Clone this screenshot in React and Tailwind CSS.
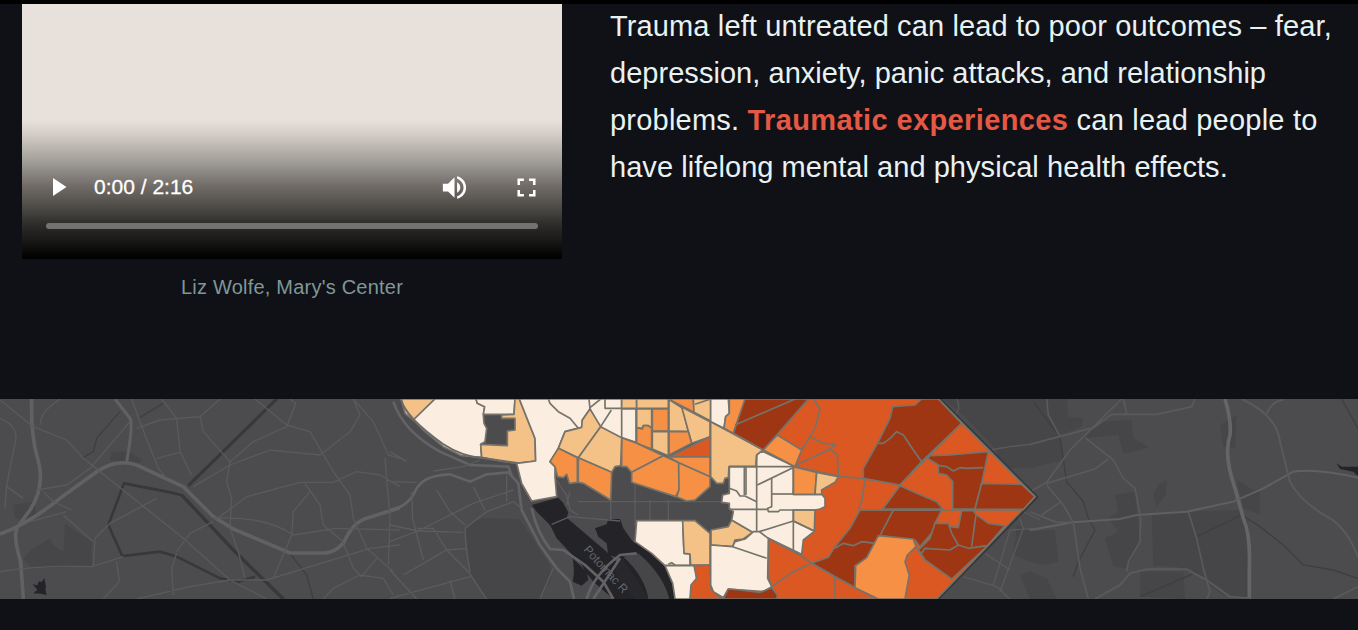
const LIGHT = '#f4c187';
const CREAM = '#fbeee0';
const ORANGE = '#f59045';
const RED = '#dc5822';
const BROWN = '#9e3613';

const tractGroups = [
  {
    x: 390,
    tracts: [
      [LIGHT, '33,12 135,12 70,75 45,55'],
      [CREAM, '135,12 70,75 100,105 160,155 215,182 275,187 272,148 285,140 290,100 282,85 280,60 284,35 262,25 258,12'],
      [CREAM, '258,12 262,25 284,35 280,58 372,58 375,12'],
      [LIGHT, '375,12 388,12 435,130 437,198 380,205 330,198 275,187 272,148 352,152 352,108 375,105 375,70 335,70 335,60 372,58'],
      [CREAM, '388,12 740,12 740,142 690,128 625,95 600,42 577,75 575,97 525,110 505,160 480,200 495,215 495,245 500,305 425,318 395,265 380,205 437,198 435,130'],
      [LIGHT, '505,160 525,110 575,97 577,75 600,42 632,95 565,188'],
      [ORANGE, '505,160 562,188 562,262 538,265 530,238 520,248 503,245 495,215 480,200'],
    ],
    lines: ['475,12 480,25 505,50 540,70 565,100', '597,12 600,42', '600,38 632,12', '632,95 664,45'],
  },
  {
    x: 580,
    tracts: [
      [CREAM, '75,12 125,12 125,40 75,40'],
      [LIGHT, '125,12 170,12 170,40 125,40'],
      [LIGHT, '170,12 265,12 265,40 170,40'],
      [CREAM, '125,42 168,42 168,142 125,128'],
      [LIGHT, '170,42 215,42 215,98 205,92 190,92 187,100 170,98'],
      [ORANGE, '170,98 187,102 190,92 205,92 215,100 215,162 170,145'],
      [ORANGE, '217,42 265,42 265,108 217,108'],
      [LIGHT, '217,110 265,110 265,182 217,162'],
      [ORANGE, '265,12 340,12 342,52'],
      [LIGHT, '340,12 392,12 392,78 342,52'],
      [CREAM, '392,12 445,12 448,55 437,65 432,100 392,80'],
      [ORANGE, '448,12 497,12 460,115 432,100 437,65 448,55'],
      [LIGHT, '267,14 308,40 325,110 267,108'],
      [LIGHT, '305,36 390,80 390,125 335,145'],
      [ORANGE, '267,110 325,110 335,145 267,180'],
      [RED, '267,186 390,125 390,186'],
      [LIGHT, '392,80 550,165 530,185 528,215 447,215 445,248 435,250 430,265 410,265 392,245'],
      [ORANGE, '125,128 170,145 250,182 155,232 140,215 125,215'],
      [LIGHT, '62,95 125,128 122,212 105,215 95,232 -5,188'],
      [ORANGE, '-5,188 95,232 92,315 10,265 -5,262'],
      [ORANGE, '265,186 390,186 390,245 296,203'],
      [ORANGE, '155,232 250,182 296,203 297,285 287,305 155,262'],
      [ORANGE, '296,203 390,245 390,275 345,315 320,318 290,305 297,285'],
      [CREAM, '170,377 308,377 312,475 330,477 330,510 255,512 215,475 165,440'],
      [LIGHT, '308,377 345,377 390,415 390,510 332,510 330,477 312,475'],
      [CREAM, '255,512 345,512 350,550 330,612 285,612 278,565'],
      [RED, '342,512 390,510 392,580 410,600 430,612 330,612 333,570 350,550'],
      [LIGHT, '393,405 445,395 455,375 518,412 490,432 465,435 458,455 393,450'],
    ],
    lines: ['392,12 345,28', '265,508 275,503 285,510'],
  },
  {
    x: 720,
    tracts: [
      [RED, '265,12 655,12 945,305 650,612 165,612 155,575 143,540 145,430 240,480 250,435 282,410 285,345 225,215 130,165'],
      [CREAM, '28,215 108,215 110,180 125,168 225,215 220,298 305,298 315,310 315,335 300,342 285,345 282,410 250,435 245,478 145,430 143,550 155,575 130,590 25,582 10,608 -20,590 -28,570 -28,450 38,455 45,440 75,432 98,412 35,375 40,350 28,340 28,325 5,322 8,300 28,295'],
      [BROWN, '10,612 25,582 60,585 120,592 155,578 172,600 170,612'],
      [BROWN, '75,12 265,12 170,120 130,165 40,115'],
      [ORANGE, '172,120 245,165 225,215 130,165'],
      [ORANGE, '220,215 290,232 285,298 220,298'],
      [LIGHT, '290,232 355,245 345,262 305,285 305,298 285,298'],
      [LIGHT, '220,345 285,345 283,408 220,378'],
      [BROWN, '420,345 665,345 645,385 638,410 600,455 585,435 480,422 440,490 405,512 405,578 345,545 275,505 325,487 345,455 390,400'],
    ],
    lines: [
      '45,90 225,12',
      '280,12 300,42 285,100 270,125 245,165',
      '270,125 310,145 347,148 330,162 352,180 355,245',
      '330,162 225,212',
      '73,215 73,300',
      '78,215 78,300',
      '28,280 50,288 60,303 75,303 110,320',
      '110,180 110,410',
      '28,215 225,215',
      '112,270 225,215',
      '155,250 155,335 143,340 145,350 175,350 180,345 285,345',
      '155,297 220,297',
      '28,343 143,343',
      '220,215 220,300',
      '220,345 220,470',
      '118,410 220,378 282,408',
      '98,410 118,410 145,430 240,480 275,505 345,545 470,612',
      '38,455 140,490',
      '155,575 220,530 270,507',
      '345,545 345,612',
      '225,215 360,245 430,250 540,270',
      '435,255 425,320 415,345',
      '520,345 480,422',
      '345,460 370,445 400,452 425,440 465,445',
    ],
  },
  {
    x: 850,
    tracts: [
      [BROWN, '215,12 265,12 335,85 215,200 150,270 40,250 40,220 85,140 120,70 128,35 195,30'],
      [BROWN, '240,182 300,180 415,170 395,265 375,342 308,342 308,260 290,240 265,235 265,210 232,190'],
      [BROWN, '395,265 515,268 555,305 520,343 375,342'],
      [BROWN, '150,272 200,295 260,320 278,342 98,342'],
      [BROWN, '335,347 370,347 378,358 415,385 465,392 410,455 305,552 225,495 205,465 240,430 255,385 295,385 300,395 325,398'],
      [ORANGE, '85,422 190,432 198,455 172,480 165,500 178,540 165,612 85,612 15,578 17,512 50,488'],
    ],
    lines: [
      '85,145 100,145 120,130 140,110 160,120 190,165 215,200',
      '335,85 150,270',
      '30,345 520,345',
      '265,212 290,215 310,228 330,218 350,220 400,218',
      '215,475 225,460 300,465 325,450 355,460 410,452',
      '295,385 305,415 325,450',
      '378,358 365,455',
      '198,455 215,480 225,495',
    ],
  },
];

function Tracts({ group }) {
  return (
    <g transform={`translate(${group.x} 395) scale(0.33333)`}>
      {group.tracts.map(([fill, points]) => (
        <polygon key={points} points={points} fill={fill} />
      ))}
      {group.lines.map((points) => (
        <polyline key={points} points={points} fill="none" />
      ))}
    </g>
  );
}

function WestStreets() {
  return (
    <g transform="translate(0 395) scale(0.33333)" fill="none" stroke="#5a595c" strokeWidth="5">
      <path d="M195 385L275 440 275 515 95 520 70 490 95 465 150 430 160 450 190 470Z" fill="#464648" stroke="none" />
      <path d="M335 170l55 0 35 25-15 15-80-15zM40 330l60-10 10 35-30 30-35-20z" fill="#464648" stroke="none" />
      <g stroke="#38383a" strokeWidth="8">
        <path d="M830 12L565 272" strokeWidth="9" />
        <path d="M850 612L700 465 545 300" strokeWidth="10" />
        <path d="M545 300L500 290 372 265 325 390 367 483 480 470 530 485 660 550 715 560 765 545" />
        <path d="M250 187L280 170 290 130 360 50M415 70L490 25M870 475L920 540 940 612" strokeWidth="4" stroke="#3f3f42" />
      </g>
      <g stroke="#616063">
        <path d="M95 12Q92 110 110 180Q140 270 90 345L50 400Q40 430 62 500L70 612" strokeWidth="11" />
        <path d="M0 417Q80 390 180 310L290 230Q350 190 410 210L550 275 640 365 700 402 870 474H975Q1005 472 1030 445Q1060 380 1100 370L1200 338" strokeWidth="11" />
        <path d="M345 12L390 70Q400 90 380 200" strokeWidth="9" />
      </g>
      <path d="M0 15L100 95 200 135 250 190 400 310 550 430 690 555 800 612M0 70Q50 90 48 130L20 270 15 340M180 12Q110 60 125 90M395 12L435 120 475 220 500 250M410 100L480 75 600 65 660 12M485 12L530 70 540 170 575 240M470 190L540 172M600 65L610 110 690 200 760 140 860 95 887 25 870 12M690 200L680 260 695 310 690 400 715 470 735 550M580 275L690 210 810 165 960 180 1050 110 1080 60 1060 12M765 12L860 90 930 110 1000 230 1050 300 1060 370 1100 460 1180 530M650 372L740 305 900 262 1000 262 1070 230 1140 240 1200 275M915 265L960 330 970 390 1030 440M930 290L880 350 875 420 820 550M640 370Q790 360 880 420L1010 400 1200 405M0 530Q120 510 275 515L370 485M280 510L285 430 330 385 470 310M190 360L280 440M350 500L358 560 310 612M410 612L570 575 690 555 800 555 1110 460 1200 450M530 475L515 520 520 600M530 470L570 415 640 380M970 612L1000 580 1080 540 1150 550 1180 600M1060 12L1120 80 1165 180 1200 190M1155 190L1170 370 1165 510M1030 445L1060 520 1085 545 1130 490M90 380L200 350M130 290L160 320 215 345M390 80L270 220 200 270 110 285M20 275L70 310" strokeWidth="4" strokeLinejoin="round" />
      <path d="M98 568l14 3 5-12 8 2 8-12 5 28-2 7 4 16-17-4-23-1 12-11z" fill="#242428" stroke="none" />
    </g>
  );
}

function RiverArea() {
  return (
    <g transform="translate(390 395) scale(0.33333)" fill="none" stroke="#5c5b5e" strokeWidth="4">
      <path d="M240 385L275 370 390 372 480 510 485 550 450 612 290 612 240 530 228 400Z" fill="#464648" stroke="none" />
      <g fill="#232328" stroke="none">
        <path d="M425 330L505 308 520 325 535 352 530 368 650 470 680 500 720 530 750 565 775 612 670 612 610 560 590 535 575 510 500 430 480 390 440 350Z" />
        <path d="M548 490Q555 530 548 560L575 572 595 555 590 530Z" />
        <path d="M615 400L650 388 655 372 690 372 700 400 725 435 745 460 780 500 820 550 855 612 775 612 745 560 690 490 655 480 650 445 625 425Z" />
        <path d="M735 440L785 475 822 510 845 550 857 612 770 612 740 550 690 480Z" />
      </g>
      <path d="M695 490L745 560 775 612 735 612 690 560 670 515Z" fill="#28282c" stroke="none" />
      <path d="M700 485Q765 545 775 612H838Q820 540 745 475Z" fill="#464648" stroke="none" />
      <g stroke="#636265" strokeWidth="8">
        <path d="M0 345Q55 335 75 290Q95 240 180 238L240 260 290 238 355 232 385 265 395 345 450 450 500 520 540 560 552 612" />
        <path d="M425 340Q440 410 480 462L520 465 585 510 640 560 670 612M590 612Q610 540 690 480L740 475M610 612L690 490" />
        <path d="M10 20Q40 110 150 170L240 210 355 215 365 240" />
      </g>
      <path d="M0 260L80 262M0 170L50 200M130 228L220 215 270 195M0 440L90 405 250 325 370 285M0 390L85 408 220 412M65 290L68 370 100 495M140 285L180 350 225 390M40 540L170 465 230 460M170 465L130 400 80 400M170 465L235 530 290 612M225 400Q225 450 240 530M225 400L290 350 370 320 395 340M0 525L80 612M0 610L240 545M180 555L195 612M250 275L285 345M350 240L350 320M490 520L450 612M415 250L430 310M485 388L540 365 690 378M495 250L530 300 540 345 565 360M565 320H1010M530 330L540 290M662 315V375M735 260V390M780 315V375M835 315V375" />
    </g>
  );
}

function EastStreets() {
  return (
    <g transform="translate(1030 395) scale(0.33333)" fill="none" stroke="#5a595c" strokeWidth="5">
      <g fill="#464648" stroke="none">
        <path d="M-260 12H110L115 65 160 70 155 95 90 120 100 195 0 220-95 220-100 165-200 60Z" />
        <path d="M220 80L305 75 310 130 355 155 335 165 280 175 265 120 160 130Z" />
        <path d="M385 270L410 255 408 300 380 335 370 300zM255 300L315 290 330 440 290 520 250 515 225 430 265 410 235 370 265 350ZM365 360L475 350 630 345 655 380 658 612 580 600 500 540 440 515 370 512ZM-40 390L0 410 75 405 85 500 40 510 0 500-50 480ZM620 255L660 280 690 290 690 360 640 340ZM330 530L460 530 465 612 330 605ZM-30 540L0 530 50 550 80 612 0 612ZM570 90L620 60 615 160 580 155Z" />
      </g>
      <g stroke="#3f3f42" strokeWidth="4">
        <path d="M10 20L90 125 110 260 160 320 175 370 195 405 145 500 130 545M330 605L470 545 500 530M500 425L635 360 690 395 760 450 820 510 910 525 984 550M935 12L984 100" />
      </g>
      <path d="M585 12Q605 80 600 120Q580 180 615 280L640 370Q662 420 658 520V612" stroke="#656467" strokeWidth="11" />
      <path d="M0 405L130 382 270 372 320 360 470 350 610 320 700 280 790 230Q860 220 984 248" strokeWidth="6" stroke="#606062" />
      <path d="M635 12Q740 60 750 140L780 260Q810 320 900 370Q950 400 984 485M195 612L270 570 300 535 350 523 470 523 530 555 600 605 660 610M710 55Q730 15 760 15" strokeWidth="6" />
      <path d="M275 12L120 165 50 262 0 290M0 148L190 98 245 58 380 58 485 35 495 12M165 128L250 195 280 250 315 280 332 370 330 440 295 500 290 530M280 12L290 55M50 265L195 222 235 192M50 12L55 60 90 125M0 350L80 382 130 382 150 520 175 612M50 270L100 330 130 382M35 360L90 322M475 350L500 430 520 520 540 590 530 612M910 612L984 575" />
      <path d="M-220 12Q-205 40-225 60M-120 165L-60 155 0 148M-30 345L30 375M-60 405L20 400M-40 345L-20 400-90 590M-60 405L-110 570M-135 475L-60 525M-200 545L-100 575-60 612" strokeWidth="4" />
      <path d="M920 205L935 215 984 215V243L970 230 930 222Z" fill="#232328" stroke="none" />
    </g>
  );
}

function IncomeMap() {
  return (
    <svg className="block h-[200px] w-full" viewBox="0 399 1358 200" preserveAspectRatio="none" aria-hidden="true">
      <rect x="0" y="399" width="1358" height="200" fill="#4c4c4e" />
      <WestStreets />
      <EastStreets />
      <RiverArea />
      <text
        transform="translate(583 550) rotate(48)"
        fill="#66666a"
        fontSize="12"
        className="font-['Liberation_Sans',sans-serif]"
      >
        Potomac R
      </text>
      <path d="M939 399L1036 497 937 599" fill="none" stroke="#38383b" strokeWidth="4" />
      <g stroke="#76736b" strokeWidth="5" strokeLinejoin="round">
        {tractGroups.map((group) => (
          <Tracts key={group.x} group={group} />
        ))}
      </g>
      <path d="M401 399Q405 417 443 444Q463 457 483 458L517 463" fill="none" stroke="#6b6a6b" strokeWidth="2" />
    </svg>
  );
}

function VideoPlayer() {
  return (
    <div className="flex h-[255px] w-[540px] flex-col justify-end overflow-hidden rounded-b-[2px] bg-[linear-gradient(to_bottom,#e8e0db_50%,#000_50%)]">
      <div className="flex h-[138px] flex-col bg-[linear-gradient(to_bottom,#e8e0db_0%,#d2ccc6_10%,#a5a19b_28%,#716c68_47%,#4a4743_64%,#2b2a28_76%,#191817_87%,#000_99%)] px-6">
        <div className="flex h-[34px] shrink-0" />
        <div className="flex h-16 shrink-0 items-center text-white">
          <svg className="h-6 w-6" viewBox="0 0 24 24" fill="currentColor">
            <path d="M7 3v18L20.500 12z" />
          </svg>
          <span className="-mt-0.5 ml-6 font-['Liberation_Sans',sans-serif] text-[21px] leading-none [-webkit-text-stroke:0.3px_white]">
            0:00 / 2:16
          </span>
          <svg className="ml-auto h-[31px] w-[31px]" viewBox="0 0 24 24" fill="currentColor">
            <path d="M3 9v6h4l5 5V4L7 9H3zm13.500 3c0-1.770-1.020-3.290-2.500-4.030v8.050c1.480-.730 2.500-2.250 2.500-4.020zM14 3.230v2.060c2.890.860 5 3.540 5 6.710s-2.110 5.850-5 6.710v2.060c4.010-.910 7-4.490 7-8.770s-2.990-7.860-7-8.770z" />
          </svg>
          <svg className="-mr-1 ml-[41px] h-[31px] w-[31px]" viewBox="0 0 24 24" fill="currentColor">
            <path d="M7 14H5v5h5v-2H7v-3zm-2-4h2V7h3V5H5v5zm12 7h-3v2h5v-5h-2v3zM14 5v2h3v3h2V5h-5z" />
          </svg>
        </div>
        <div className="mt-1 h-1.5 shrink-0 rounded-full bg-[#737271]" />
      </div>
    </div>
  );
}

export default function App() {
  return (
    <div className="flex h-[630px] w-[1358px] flex-col overflow-hidden border-t-4 border-black bg-[#101116] font-['Liberation_Sans',Arial,sans-serif]">
      <section className="flex h-[395px] shrink-0 pl-[22px]">
        <figure className="w-[540px] shrink-0">
          <VideoPlayer />
          <figcaption className="mt-3 text-center text-[20px] leading-8 tracking-[0.22px] text-[#7f9799]">
            Liz Wolfe, Mary's Center
          </figcaption>
        </figure>
        <p className="-mt-px ml-12 whitespace-nowrap text-[29px] leading-[47px] text-[#e8f2f3]">
          <span className="tracking-[0.13px]">Trauma left untreated can lead to poor outcomes – fear,</span>
          <br />
          <span className="tracking-[0.04px]">depression, anxiety, panic attacks, and relationship</span>
          <br />
          <span className="tracking-[0.22px]">
            problems. <strong className="font-bold tracking-[0.38px] text-[#e45844]">Traumatic experiences</strong> can
            lead people to
          </span>
          <br />
          <span className="tracking-[0.05px]">have lifelong mental and physical health effects.</span>
        </p>
      </section>
      <IncomeMap />
    </div>
  );
}
